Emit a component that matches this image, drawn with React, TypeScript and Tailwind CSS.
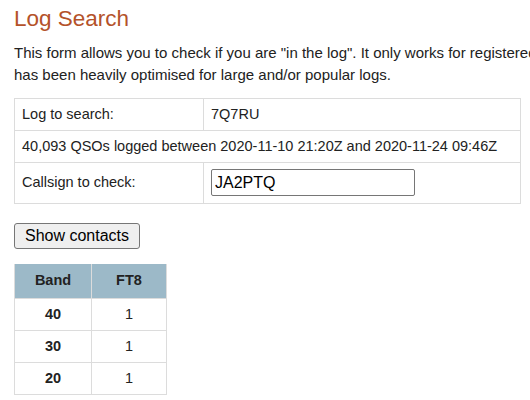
export default function App() {
  const bands = [
    { band: '40', ft8: '1' },
    { band: '30', ft8: '1' },
    { band: '20', ft8: '1' },
  ];

  return (
    <div className="w-[530px] h-[400px] overflow-hidden bg-white pl-[14px] pt-[5px] text-[#222] font-['Liberation_Sans',Arial,sans-serif]">
      <h1 className="text-[22.5px] leading-[28px] text-[#b4522a]">Log Search</h1>
      <p className="mt-[9px] w-[700px] whitespace-nowrap text-[15px] leading-[22px]">
        This form allows you to check if you are "in the log". It only works for registered logs.
        <br />
        has been heavily optimised for large and/or popular logs.
      </p>

      <table className="mt-[12px] w-[507px] border-collapse text-[14.5px] leading-[17px]">
        <tbody>
          <tr>
            <td className="w-[189px] border border-[#dcdcdc] px-[7px] py-[7px]">Log to search:</td>
            <td className="border border-[#dcdcdc] px-[7px] py-[7px]">7Q7RU</td>
          </tr>
          <tr>
            <td colSpan={2} className="whitespace-nowrap border border-[#dcdcdc] px-[7px] py-[7px]">
              40,093 QSOs logged between 2020-11-10 21:20Z and 2020-11-24 09:46Z
            </td>
          </tr>
          <tr>
            <td className="border border-[#dcdcdc] px-[7px] pt-[6px] pb-[7px]">Callsign to check:</td>
            <td className="border border-[#dcdcdc] px-[7px] pt-[6px] pb-[7px]">
              <input
                type="text"
                defaultValue="JA2PTQ"
                className="block w-[204px] h-[27px] rounded-[2px] border border-[#767676] bg-white px-[3px] text-[16px] text-black outline-none"
              />
            </td>
          </tr>
        </tbody>
      </table>

      <button
        type="button"
        className="mt-[19px] block h-[26px] rounded-[3px] border border-[#767676] bg-[#efefef] px-[10px] text-[16px] leading-[18px] text-black"
      >
        Show contacts
      </button>

      <table className="mt-[15px] w-[153px] border-collapse text-center text-[14.5px] leading-[17px]">
        <thead>
          <tr className="bg-[#9cb9c8]">
            <th className="h-[34px] w-[77px] border-x border-[#dcdcdc] font-bold">Band</th>
            <th className="h-[34px] border-x border-[#dcdcdc] font-bold">FT8</th>
          </tr>
        </thead>
        <tbody>
          {bands.map((b) => (
            <tr key={b.band}>
              <td className="h-[32px] border border-[#dcdcdc] font-bold">{b.band}</td>
              <td className="h-[32px] border border-[#dcdcdc]">{b.ft8}</td>
            </tr>
          ))}
        </tbody>
      </table>
    </div>
  );
}
